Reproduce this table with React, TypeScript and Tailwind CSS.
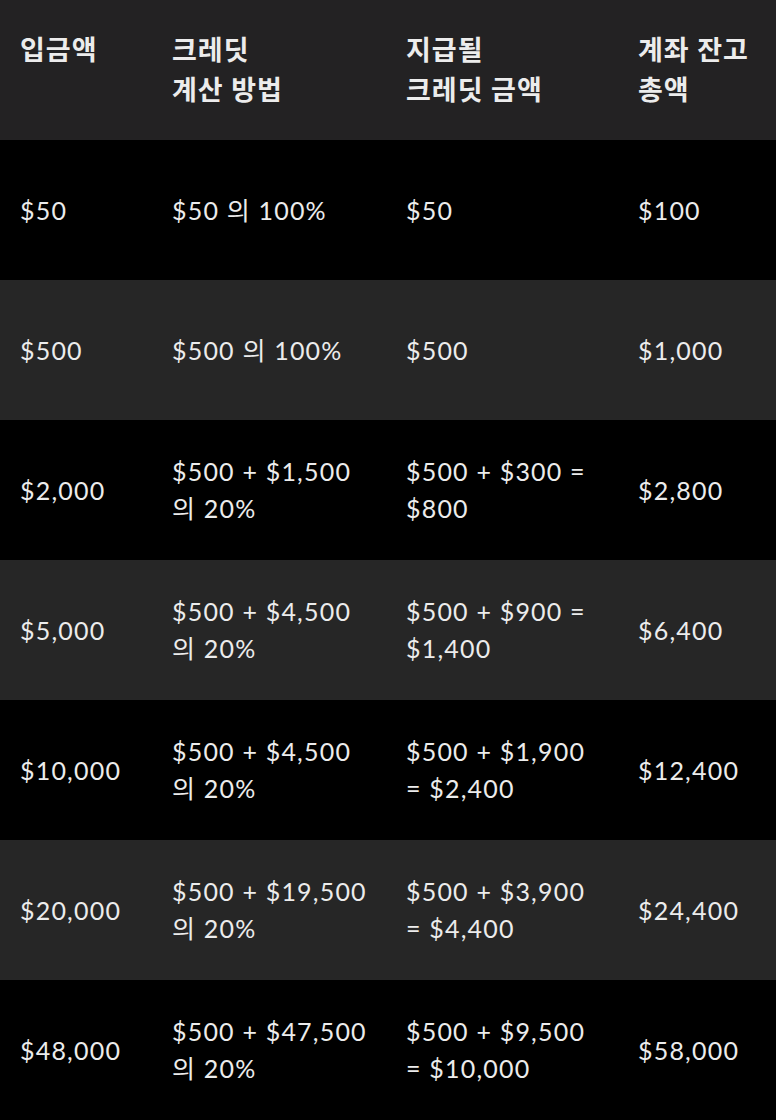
const rows: [string, string, string, string][] = [
  ["$50", "$50 의 100%", "$50", "$100"],
  ["$500", "$500 의 100%", "$500", "$1,000"],
  ["$2,000", "$500 + $1,500 의 20%", "$500 + $300 = $800", "$2,800"],
  ["$5,000", "$500 + $4,500 의 20%", "$500 + $900 = $1,400", "$6,400"],
  ["$10,000", "$500 + $4,500 의 20%", "$500 + $1,900 = $2,400", "$12,400"],
  ["$20,000", "$500 + $19,500 의 20%", "$500 + $3,900 = $4,400", "$24,400"],
  ["$48,000", "$500 + $47,500 의 20%", "$500 + $9,500 = $10,000", "$58,000"],
];

const cols = "grid grid-cols-[152px_234px_232px_158px]";
const pads = ["pl-5 pr-2", "pl-5 pr-[12px]", "pl-5 pr-[14px]", "pl-5 pr-0"];

export default function App() {
  return (
    <div
      className="w-[776px] bg-black text-[#ececec] text-[25px] leading-[37px] tracking-[1.2px]"
      style={{ fontFamily: 'Lato, "Noto Sans CJK KR", sans-serif' }}
    >
      <div className={`${cols} h-[140px] bg-[#232223] pt-[30px] font-bold text-[27px] leading-[40px] tracking-[1px]`}>
        <div className="pl-5">입금액</div>
        <div className="pl-5">
          크레딧
          <br />
          계산 방법
        </div>
        <div className="pl-5">
          지급될
          <br />
          크레딧 금액
        </div>
        <div className="pl-5 whitespace-nowrap">
          계좌 잔고
          <br />
          총액
        </div>
      </div>
      {rows.map((row, i) => (
        <div
          key={i}
          className={`${cols} h-[140px] items-center ${i % 2 === 0 ? "bg-black" : "bg-[#262626]"}`}
        >
          {row.map((cell, j) => (
            <div key={j} className={pads[j]}>
              {cell}
            </div>
          ))}
        </div>
      ))}
    </div>
  );
}
